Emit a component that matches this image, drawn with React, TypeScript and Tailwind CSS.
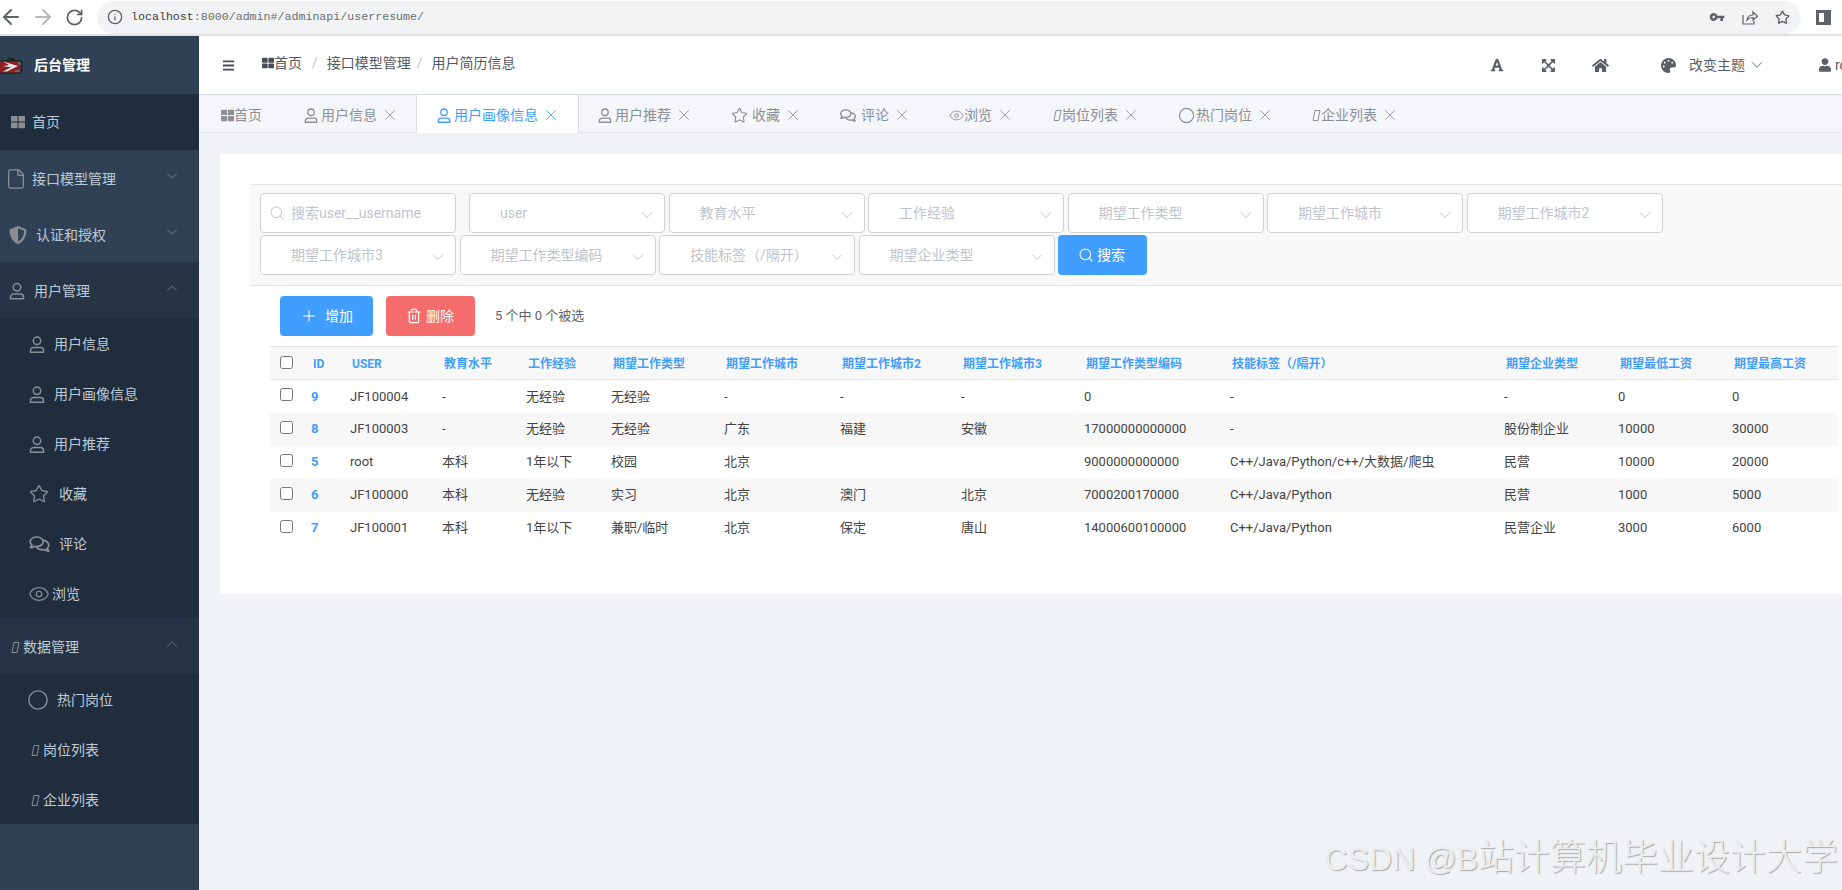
import React from 'react';
import { ArrowLeft, ArrowRight, RotateCw, Info, Star, ChevronDown, ChevronUp, Search, X, Plus, Trash2, Eye, Circle, File } from 'lucide-react';
import { FaBars, FaExpandArrowsAlt, FaFont, FaHome, FaPalette, FaRegComments, FaShieldAlt, FaThLarge, FaUser } from 'react-icons/fa';
import { MdVpnKey } from 'react-icons/md';

const UserIcon: React.FC<{ className?: string }> = ({ className }) => (
  <svg viewBox="0 0 16 17" fill="none" stroke="currentColor" strokeWidth="1.5" className={className}>
    <circle cx="8" cy="4.8" r="3.7" />
    <path d="M1.5 16.200v-1.600a3 3 0 0 1 3-3h7a3 3 0 0 1 3 3v1.600z" />
  </svg>
);

// the missing icon-font glyph, shows as a slanted box
const Tofu: React.FC<{ className?: string }> = ({ className }) => (
  <svg viewBox="0 0 9 13" fill="none" stroke="currentColor" strokeWidth="1" className={className}>
    <path d="M3 1.500h5L6 11.500H1z" />
  </svg>
);

const Logo = () => (
  <svg viewBox="0 0 23 19" className="w-[23px] h-[19px] shrink-0">
    <path d="M0 4h7l1-2.500h6L15 4h6l1.500 1v11l-2 2H0z" fill="#1d2a2c" />
    <path d="M0 5.500h20.500v11H0z" fill="#8f1f25" />
    <path d="M3 5.500l15 4.500-11 5.500h-4l8-4.300-8-1 6-1.200z" fill="#e4e6e4" />
    <path d="M17 6h4v3h-2zM15 14h5v2h-5z" fill="#5d6b62" />
  </svg>
);

const ShareIcon = () => (
  <svg viewBox="0 0 16 16" fill="none" stroke="#5f6368" strokeWidth="1.2" className="w-4 h-4">
    <path d="M1 6v9h11v-3" />
    <path d="M5 11c.5-3.500 3-5 6-5V3l4.500 4.300L11 11V8.500c-2.500 0-4.500.8-6 2.500z" />
  </svg>
);

const Browser = () => (
  <div className="h-9 shrink-0 flex items-center bg-white border-b-2 border-[#dfe1e5]">
    <ArrowLeft className="w-6 h-6 -ml-px text-[#5f6368]" strokeWidth={2} />
    <ArrowRight className="w-6 h-6 ml-[8px] text-[#b4b7bb]" strokeWidth={2} />
    <RotateCw className="w-[19px] h-[19px] ml-[10px] text-[#5f6368]" strokeWidth={2.2} />
    <div className="ml-[13px] w-[1704px] h-[33px] rounded-full bg-[#f1f3f4] flex items-center">
      <Info className="w-4 h-4 ml-[10px] text-[#5f6368]" />
      <span className="ml-[8px] text-[11.63px] font-['Liberation_Mono',monospace] text-[#6b6f73]">
        <span className="text-[#3c4043]">localhost</span>:8000/admin#/adminapi/userresume/
      </span>
      <MdVpnKey className="ml-auto w-4 h-4 text-[#5f6368]" />
      <span className="ml-[17px]"><ShareIcon /></span>
      <Star className="ml-[17px] w-[15px] h-[15px] text-[#5f6368]" strokeWidth={2.2} />
      <span className="w-[11px]" />
    </div>
    <div className="ml-[15px] w-[15px] h-[15px] border-[3px] border-[#5f6368] border-r-[7px]" />
  </div>
);

const Sidebar = () => {
  const rowText = 'text-sm text-[#bfcbd9]';
  const iconTone = 'text-[#8a8f96]';
  const sub = 'h-[50px] flex items-center bg-[#1f2d3d] pt-[2px] ' + rowText;
  const fold = 'ml-auto mr-[18px] -mt-[6px] w-[18px] h-[18px] text-[#6e7c8c]';
  return (
    <div className="w-[199px] shrink-0 bg-[#304156] flex flex-col">
      <div className="h-[58px] flex items-center">
        <Logo />
        <span className="ml-[11px] text-sm font-bold text-white">后台管理</span>
      </div>
      <div className={'h-[56px] flex items-center bg-[#1f2d3d] ' + rowText}>
        <FaThLarge className={'ml-[11px] w-[14px] h-[14px] ' + iconTone} />
        <span className="ml-[7px]">首页</span>
      </div>
      <div className={'h-[56px] flex items-center pt-[2px] ' + rowText}>
        <File className={'ml-[5px] w-[22px] h-[22px] ' + iconTone} strokeWidth={1.4} />
        <span className="ml-[5px]">接口模型管理</span>
        <ChevronDown className={fold} strokeWidth={1.2} />
      </div>
      <div className={'h-[56px] flex items-center pt-[2px] ' + rowText}>
        <FaShieldAlt className={'ml-[9px] w-[18px] h-[18px] ' + iconTone} />
        <span className="ml-[9px]">认证和授权</span>
        <ChevronDown className={fold} strokeWidth={1.2} />
      </div>
      <div className={'h-[56px] flex items-center bg-[#263445] pt-[2px] ' + rowText}>
        <UserIcon className={'ml-[9px] w-[16px] h-[18px] ' + iconTone} />
        <span className="ml-[9px]">用户管理</span>
        <ChevronUp className={fold} strokeWidth={1.2} />
      </div>
      <div className={sub}><UserIcon className={'ml-[29px] w-[16px] h-[17px] ' + iconTone} /><span className="ml-[9px]">用户信息</span></div>
      <div className={sub}><UserIcon className={'ml-[29px] w-[16px] h-[17px] ' + iconTone} /><span className="ml-[9px]">用户画像信息</span></div>
      <div className={sub}><UserIcon className={'ml-[29px] w-[16px] h-[17px] ' + iconTone} /><span className="ml-[9px]">用户推荐</span></div>
      <div className={sub}><Star className={'ml-[29px] w-[20px] h-[20px] ' + iconTone} strokeWidth={1.6} /><span className="ml-[10px]">收藏</span></div>
      <div className={sub}><FaRegComments className={'ml-[29px] w-[21px] h-[18px] ' + iconTone} /><span className="ml-[9px]">评论</span></div>
      <div className={sub}><Eye className={'ml-[28px] w-[22px] h-[22px] ' + iconTone} strokeWidth={1.3} /><span className="ml-[2px]">浏览</span></div>
      <div className={'h-[56px] flex items-center bg-[#263445] pt-[2px] ' + rowText}>
        <Tofu className={'ml-[11px] w-[9px] h-[13px] ' + iconTone} />
        <span className="ml-[3px]">数据管理</span>
        <ChevronUp className={fold} strokeWidth={1.2} />
      </div>
      <div className={sub}><Circle className={'ml-[27px] w-[22px] h-[22px] ' + iconTone} strokeWidth={1.5} /><span className="ml-[8px]">热门岗位</span></div>
      <div className={sub}><Tofu className={'ml-[31px] w-[9px] h-[13px] ' + iconTone} /><span className="ml-[3px]">岗位列表</span></div>
      <div className={sub}><Tofu className={'ml-[31px] w-[9px] h-[13px] ' + iconTone} /><span className="ml-[3px]">企业列表</span></div>
    </div>
  );
};

const Topbar = () => (
  <div className="h-[58px] shrink-0 bg-white flex items-center text-sm text-[#555a60]">
    <FaBars className="ml-[23px] w-[13px] h-[13px] text-[#4a4f55]" />
    <div className="ml-[27px] flex items-center pb-[4px]">
      <FaThLarge className="w-[12px] h-[12px] text-[#4a4f55]" />
      <span>首页</span>
      <span className="ml-[10px] text-[#c0c4cc]">/</span>
      <span className="ml-[9px]">接口模型管理</span>
      <span className="ml-[6px] text-[#c0c4cc]">/</span>
      <span className="ml-[9px]">用户简历信息</span>
    </div>
    <div className="ml-auto w-[352px] overflow-hidden flex items-center text-[#5a6068]">
      <FaFont className="w-[14px] h-[14px] shrink-0" />
      <FaExpandArrowsAlt className="ml-[37px] w-[15px] h-[15px] shrink-0" />
      <FaHome className="ml-[36px] w-[17px] h-[15px] shrink-0" />
      <FaPalette className="ml-[52px] w-[15px] h-[15px] shrink-0" />
      <span className="ml-[13px] shrink-0">改变主题</span>
      <ChevronDown className="ml-[3px] w-[18px] h-[18px] shrink-0" strokeWidth={1.2} />
      <FaUser className="ml-[53px] w-[12px] h-[14px] shrink-0" />
      <span className="ml-[4px] shrink-0">root</span>
    </div>
  </div>
);

type Tab = { label: string; icon: React.ReactNode; closable?: boolean; active?: boolean };

const tabs: Tab[] = [
  { label: '首页', icon: <FaThLarge className="w-[13px] h-[13px]" /> },
  { label: '用户信息', icon: <UserIcon className="w-[14px] h-[15px] mr-[3px]" />, closable: true },
  { label: '用户画像信息', icon: <UserIcon className="w-[14px] h-[15px] mr-[3px]" />, closable: true, active: true },
  { label: '用户推荐', icon: <UserIcon className="w-[14px] h-[15px] mr-[3px]" />, closable: true },
  { label: '收藏', icon: <Star className="w-[17px] h-[17px] mr-[4px]" strokeWidth={1.6} />, closable: true },
  { label: '评论', icon: <FaRegComments className="w-[16px] h-[15px] mr-[5px]" />, closable: true },
  { label: '浏览', icon: <Eye className="w-[15px] h-[15px]" strokeWidth={1.5} />, closable: true },
  { label: '岗位列表', icon: <Tofu className="w-[9px] h-[13px] ml-[1px]" />, closable: true },
  { label: '热门岗位', icon: <Circle className="w-[17px] h-[17px] mr-[1px]" strokeWidth={1.6} />, closable: true },
  { label: '企业列表', icon: <Tofu className="w-[9px] h-[13px]" />, closable: true },
];

const TabBar = () => (
  <div className="h-[39px] shrink-0 flex bg-[#f4f6fa] border-t border-b border-t-[#d8dce5] border-b-[#e4e7ed] text-sm text-[#8c9096]">
    {tabs.map((t, i) => (
      <div
        key={t.label}
        className={`h-[38px] pt-[2px] flex items-center ${i === 0 ? 'pl-[22px] pr-[22px]' : 'pl-[20px] pr-[22px]'} ${
          t.active ? 'bg-white text-[#409eff] border-x border-[#dcdfe6] -mx-px' : ''
        }`}
      >
        {t.icon}
        <span>{t.label}</span>
        {t.closable && <X className="ml-[4px] -mr-[4px] w-[18px] h-[18px]" strokeWidth={1.1} />}
      </div>
    ))}
  </div>
);

const Select: React.FC<{ label: string }> = ({ label }) => (
  <div className="w-[196px] h-10 bg-white border border-[#d2d2d2] rounded flex items-center pl-[30px] pr-[7px] text-sm text-[#c0c4cc]">
    <span>{label}</span>
    <ChevronDown className="ml-auto mt-[3px] w-5 h-5" strokeWidth={1.2} />
  </div>
);

const FilterBar = () => (
  <div className="ml-[30px] h-[102px] bg-[#f8f8f8] border-y border-[#e6e6e6] pt-2 pl-[10px] flex flex-wrap content-start gap-x-[3.500px] gap-y-[2px]">
    <div className="w-[196px] h-10 mr-[9.500px] bg-white border border-[#d2d2d2] rounded flex items-center pl-[8px] text-sm text-[#c0c4cc]">
      <Search className="w-[16px] h-[16px]" strokeWidth={1.5} />
      <span className="ml-[6px]">搜索user__username</span>
    </div>
    {['user', '教育水平', '工作经验', '期望工作类型', '期望工作城市', '期望工作城市2', '期望工作城市3', '期望工作类型编码', '技能标签（/隔开）', '期望企业类型'].map((s) => (
      <Select key={s} label={s} />
    ))}
    <button className="w-[89px] h-10 bg-[#409eff] rounded flex items-center pl-[20px] text-sm text-white">
      <Search className="w-[16px] h-[16px]" strokeWidth={1.6} />
      <span className="ml-[3px]">搜索</span>
    </button>
  </div>
);

const columns = [
  { head: 'ID', w: 'w-[39px]' },
  { head: 'USER', w: 'w-[92px]' },
  { head: '教育水平', w: 'w-[84px]' },
  { head: '工作经验', w: 'w-[85px]' },
  { head: '期望工作类型', w: 'w-[113px]' },
  { head: '期望工作城市', w: 'w-[116px]' },
  { head: '期望工作城市2', w: 'w-[121px]' },
  { head: '期望工作城市3', w: 'w-[123px]' },
  { head: '期望工作类型编码', w: 'w-[146px]' },
  { head: '技能标签（/隔开）', w: 'w-[274px]' },
  { head: '期望企业类型', w: 'w-[114px]' },
  { head: '期望最低工资', w: 'w-[114px]' },
  { head: '期望最高工资', w: 'w-[116px]' },
];

const rows = [
  ['9', 'JF100004', '-', '无经验', '无经验', '-', '-', '-', '0', '-', '-', '0', '0'],
  ['8', 'JF100003', '-', '无经验', '无经验', '广东', '福建', '安徽', '17000000000000', '-', '股份制企业', '10000', '30000'],
  ['5', 'root', '本科', '1年以下', '校园', '北京', '', '', '9000000000000', 'C++/Java/Python/c++/大数据/爬虫', '民营', '10000', '20000'],
  ['6', 'JF100000', '本科', '无经验', '实习', '北京', '澳门', '北京', '7000200170000', 'C++/Java/Python', '民营', '1000', '5000'],
  ['7', 'JF100001', '本科', '1年以下', '兼职/临时', '北京', '保定', '唐山', '14000600100000', 'C++/Java/Python', '民营企业', '3000', '6000'],
];

const ResultTable = () => (
  <table className="mt-[10px] ml-[50px] w-[1568px] table-fixed text-[13px] text-[#444]">
    <colgroup>
      <col className="w-[31px]" />
      {columns.map((c) => (
        <col key={c.head} className={c.w} />
      ))}
    </colgroup>
    <thead>
      <tr className="h-[33px] bg-[#f8f8f8] border-y border-[#e6e6e6]">
        <th className="pl-[10px] text-left align-middle"><input type="checkbox" className="block -mt-[2px]" /></th>
        {columns.map((c) => (
          <th key={c.head} className="pl-3 pt-[2px] text-left text-xs font-bold text-[#409eff] whitespace-nowrap">{c.head}</th>
        ))}
      </tr>
    </thead>
    <tbody>
      {rows.map((r, i) => (
        <tr key={r[0]} className={`h-[33px] ${i % 2 === 1 ? 'bg-[#f7f7f7]' : ''}`}>
          <td className="pl-[10px]"><input type="checkbox" className="block -mt-[3px]" /></td>
          {r.map((v, j) => (
            <td key={j} className={`pl-[10px] whitespace-nowrap ${j === 0 ? 'font-bold text-[#409eff]' : ''}`}>{v}</td>
          ))}
        </tr>
      ))}
    </tbody>
  </table>
);

export default function App() {
  return (
    <div className="relative w-[1842px] h-[890px] overflow-hidden flex flex-col bg-white font-[Roboto,'Noto_Sans_CJK_SC',sans-serif]">
      <Browser />
      <div className="flex-1 flex min-h-0">
        <Sidebar />
        <div className="flex-1 min-w-0 flex flex-col bg-[#f0f3f6]">
          <Topbar />
          <TabBar />
          <div className="mt-[21px] ml-[21px] bg-white pt-[30px] pb-[49px]">
            <FilterBar />
            <div className="mt-[10px] pl-[60px] flex items-center">
              <button className="w-[93px] h-10 bg-[#409eff] rounded flex items-center pl-[20px] text-sm text-white">
                <Plus className="w-[18px] h-[18px]" strokeWidth={1.4} />
                <span className="ml-[7px]">增加</span>
              </button>
              <button className="ml-[13px] w-[89px] h-10 bg-[#f56c6c] rounded flex items-center pl-[20px] text-sm text-white">
                <Trash2 className="w-[16px] h-[16px]" strokeWidth={1.8} />
                <span className="ml-[4px]">删除</span>
              </button>
              <span className="ml-[20px] text-[13px] text-[#606266]">5 个中 0 个被选</span>
            </div>
            <ResultTable />
          </div>
        </div>
      </div>
      <div className="absolute right-[4px] bottom-[14px] text-[36px] leading-none font-light text-[#eceef0] [text-shadow:1px_1px_1px_#a8a8a8] font-['Liberation_Sans','Noto_Sans_CJK_SC',sans-serif]">
        <span className="text-[32px]">CSDN @B</span>站计算机毕业设计大学
      </div>
    </div>
  );
}
